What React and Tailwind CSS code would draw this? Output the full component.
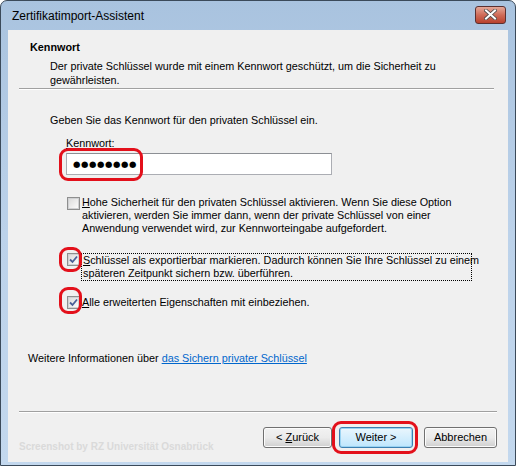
import React from 'react';

const font = { fontFamily: '"Liberation Sans", Arial, sans-serif' };

function Checkbox({ checked }) {
  return (
    <span className="flex h-[13px] w-[13px] shrink-0 items-center justify-center border border-[#8e8f8f] bg-white">
      <span className="flex h-[11px] w-[11px] items-center justify-center border border-[#d0d1d3] bg-gradient-to-br from-[#dcdcdc] to-[#fbfbfb]">
        {checked && (
          <svg width="9" height="9" viewBox="0 0 9 9">
            <path d="M1 4.5 L3.5 7 L8 1.5" fill="none" stroke="#4a5f97" strokeWidth="1.8" />
          </svg>
        )}
      </span>
    </span>
  );
}

function Button({ children, primary, width }) {
  return (
    <button
      className={`h-[21px] ${width} rounded-[3px] border text-[11px] text-black ${
        primary
          ? 'border-[#3c7fb1] bg-gradient-to-b from-[#eaf6fd] to-[#bee6fd] shadow-[inset_0_0_0_1px_#9ad3f2]'
          : 'border-[#707070] bg-gradient-to-b from-[#f2f2f2] via-[#ebebeb] to-[#cfcfcf] shadow-[inset_0_0_0_1px_#fcfcfc]'
      }`}
    >
      {children}
    </button>
  );
}

function RedMark({ className }) {
  return <div className={`pointer-events-none absolute rounded-[9px] border-[3px] border-[#e3101b] ${className}`} />;
}

export default function App() {
  return (
    <div className="relative h-[466px] w-[516px] bg-white" style={font}>
      <div className="flex h-full w-full flex-col rounded-t-[7px] border border-[#3b4a5a] bg-gradient-to-b from-[#a9c3df] via-[#bcd2ea] to-[#c3d8ee] px-[7px] pb-[3px]">
        {/* title bar */}
        <div className="flex h-[29px] shrink-0 items-center justify-between pl-[4px]">
          <span className="text-[12px] text-black">Zertifikatimport-Assistent</span>
          <div className="mt-[-2px] mr-[2px] flex h-[18px] w-[31px] items-center justify-center rounded-[3px] border border-[#5b3030] bg-gradient-to-b from-[#e3a899] via-[#cf6b58] to-[#b8412d]">
            <svg width="13" height="11" viewBox="0 0 13 11">
              <path d="M2 1.5 L11 9.5 M11 1.5 L2 9.5" stroke="#4a4a4a" strokeWidth="3.6" strokeLinecap="square" />
              <path d="M2 1.5 L11 9.5 M11 1.5 L2 9.5" stroke="#ffffff" strokeWidth="2" strokeLinecap="square" />
            </svg>
          </div>
        </div>

        {/* client */}
        <div className="relative flex flex-1 flex-col bg-[#f0f0f0] text-[10.8px] text-black">
          <div className="pl-[22px] pt-[10px] font-bold leading-[14px]">Kennwort</div>
          <div className="pl-[42px] pt-[5px] leading-[14px]">
            Der private Schlüssel wurde mit einem Kennwort geschützt, um die Sicherheit zu
            <br />
            gewährleisten.
          </div>
          <div className="ml-[11px] mt-[1px] w-[475px] border-t border-b border-t-[#a0a0a0] border-b-white" />

          <div className="pl-[42px] pt-[23px] leading-[14px]">Geben Sie das Kennwort für den privaten Schlüssel ein.</div>
          <div className="pl-[58px] pt-[9px] leading-[14px]">
            <span className="underline">K</span>ennwort:
          </div>
          <div className="ml-[58px] mt-[3px] flex h-[22px] w-[266px] items-center border border-[#abadb3] border-t-[#8c8f94] bg-white pl-[6px]">
            <span className="text-[8.5px] tracking-[0.6px]" style={{ fontFamily: '"DejaVu Sans", sans-serif' }}>
              ●●●●●●●●
            </span>
          </div>

          <div className="ml-[59px] mt-[21px] flex items-start gap-[2px]">
            <div className="pt-[1px]">
              <Checkbox />
            </div>
            <div className="whitespace-nowrap leading-[13px]">
              <span className="underline">H</span>ohe Sicherheit für den privaten Schlüssel aktivieren. Wenn Sie diese Option
              <br />
              aktivieren, werden Sie immer dann, wenn der private Schlüssel von einer
              <br />
              Anwendung verwendet wird, zur Kennworteingabe aufgefordert.
            </div>
          </div>

          <div className="ml-[59px] mt-[18px] flex items-start gap-[1px]">
            <Checkbox checked />
            <div className="w-[391px] whitespace-nowrap border border-dotted border-black px-[1px] leading-[13px]">
              <span className="underline">S</span>chlüssel als exportierbar markieren. Dadurch können Sie Ihre Schlüssel zu einem
              <br />
              späteren Zeitpunkt sichern bzw. überführen.
            </div>
          </div>

          <div className="ml-[59px] mt-[15px] flex items-center gap-[2px]">
            <Checkbox checked />
            <div className="leading-[13px]">
              <span className="underline">A</span>lle erweiterten Eigenschaften mit einbeziehen.
            </div>
          </div>

          <div className="pl-[20px] pt-[42px] leading-[14px]">
            Weitere Informationen über <span className="text-[#0066cc] underline">das Sichern privater Schlüssel</span>
          </div>

          <div className="ml-[11px] mt-[46px] w-[478px] border-t border-b border-t-[#a0a0a0] border-b-white" />

          <div className="mt-[14px] flex items-start justify-between pl-[11px] pr-[11px]">
            <div className="mt-[14px] text-[10px] font-bold leading-[12px] text-[#dadada]">
              Screenshot by RZ Universität Osnabrück
            </div>
            <div className="flex items-center">
              <Button width="w-[69px]">
                &lt; <span className="underline">Z</span>urück
              </Button>
              <div className="ml-[7px]">
                <Button primary width="w-[74px]">Weiter &gt;</Button>
              </div>
              <div className="ml-[11px]">
                <Button width="w-[73px]">Abbrechen</Button>
              </div>
            </div>
          </div>

          {/* annotations */}
          <RedMark className="left-[51px] top-[118px] h-[33px] w-[84px]" />
          <RedMark className="left-[51px] top-[217px] h-[25px] w-[23px]" />
          <RedMark className="left-[51px] top-[257px] h-[27px] w-[23px]" />
          <RedMark className="left-[324px] top-[391px] h-[33px] w-[86px]" />
        </div>
      </div>
    </div>
  );
}
